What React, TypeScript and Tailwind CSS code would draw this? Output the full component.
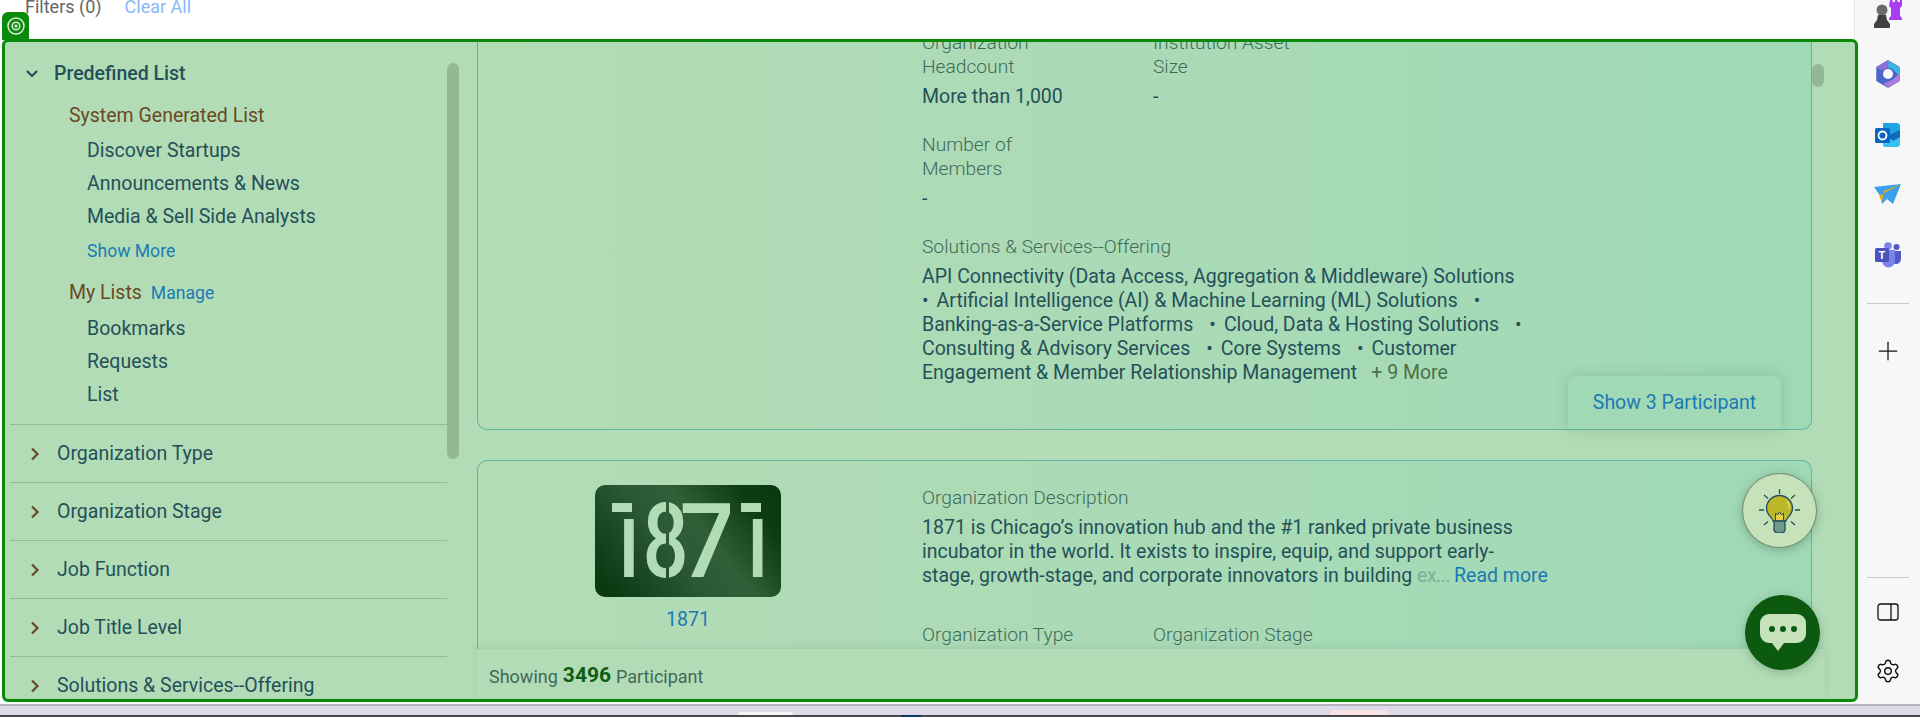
import React from "react";
import { Plus, Settings } from "lucide-react";

const systemLists = ["Discover Startups", "Announcements & News", "Media & Sell Side Analysts"];
const myLists = ["Bookmarks", "Requests", "List"];
const filters = ["Organization Type", "Organization Stage", "Job Function", "Job Title Level", "Solutions & Services--Offering"];

const Dot = ({ first }: { first?: boolean }) => (
    <span className={first ? "mr-[8px]" : "ml-[16px] mr-[8px]"}>•</span>
);

const SideRail = () => (
    <aside className="relative z-0 flex h-[704px] w-[66px] flex-col items-center border-l border-[#e8e8e8] bg-[#f7f7f7]">
        <svg width="32" height="30" viewBox="0 0 32 30" className="h-[30px] shrink-0">
            <path d="M18 0h2.500v2H23V0h2.500v2H28V0h2v6l-2 2v8l2 2v2H17v-2l2-2V8l-2-2z" fill="#a93df0" />
            <circle cx="10" cy="10" r="5.500" fill="#6a6a6a" />
            <path d="M6 15h8l1 5 3 4v3a1 1 0 0 1-1 1H3a1 1 0 0 1-1-1v-3l3-4z" fill="#404040" />
        </svg>
        <svg width="26" height="28" viewBox="0 0 26 28" className="mt-[30px] shrink-0">
            <path d="M13 1l11 6.500v13L13 27 2 20.500v-13z" fill="#4d66c9" stroke="#4d66c9" strokeLinejoin="round" strokeWidth="1.500" />
            <path d="M13 1l11 6.500V15l-6-6-5-2z" fill="#39b4e6" stroke="#39b4e6" strokeLinejoin="round" strokeWidth="1" />
            <path d="M24 14v6.500L13 27l-4-3 9-4z" fill="#b07be0" stroke="#b07be0" strokeLinejoin="round" strokeWidth="1" />
            <path d="M13 1L2 7.500 8 10l5-3z" fill="#8f6fd8" stroke="#8f6fd8" strokeLinejoin="round" strokeWidth="1" />
            <circle cx="13" cy="14" r="5" fill="#f7f7f7" />
        </svg>
        <svg width="26" height="26" viewBox="0 0 26 26" className="mt-[34px] shrink-0">
            <path d="M8 1h15l2 2v9H8z" fill="#1fa5e6" />
            <path d="M8 12l17 0v11l-2 2H9l-1-2z" fill="#38c0ee" />
            <path d="M12 14l13-6v7l-7 4z" fill="#0f6cbd" />
            <rect x="0" y="6" width="15" height="15" rx="1.500" fill="#0a66c2" />
            <circle cx="7.500" cy="13.500" r="4" fill="none" stroke="#fff" strokeWidth="1.800" />
        </svg>
        <svg width="28" height="20" viewBox="0 0 28 20" className="mt-[36px] shrink-0">
            <path d="M0 3l27-3-8 20-6-5-5 5-1-7z" fill="#3ba0ea" />
            <path d="M5 12L27 0 10 7 8 18z" fill="#f0a81c" />
        </svg>
        <svg width="26" height="26" viewBox="0 0 26 26" className="mt-[38px] shrink-0">
            <circle cx="21.500" cy="5" r="3" fill="#5059c9" />
            <path d="M17 9h9v8a5 5 0 0 1-8 4z" fill="#5059c9" />
            <circle cx="13" cy="4" r="3.800" fill="#7b83eb" />
            <path d="M6 8h14v11a6.500 6.500 0 0 1-13 0z" fill="#7b83eb" />
            <rect x="0" y="6" width="14" height="14" rx="1.500" fill="#4b53bc" />
            <text x="7" y="17" textAnchor="middle" fontSize="11" fontWeight="700" fill="#fff" fontFamily="Roboto, sans-serif">T</text>
        </svg>
        <div className="mt-[35px] h-px w-[42px] shrink-0 bg-[#c9c9c9]" />
        <Plus size={30} strokeWidth={1} className="mt-[32px] shrink-0 text-[#111]" />
        <div className="mt-auto h-px w-[42px] shrink-0 bg-[#c9c9c9]" />
        <svg width="22" height="18" viewBox="0 0 22 18" className="mt-[25px] shrink-0" fill="none" stroke="#111" strokeWidth="1.300">
            <rect x="1" y="1" width="20" height="16" rx="2.500" />
            <path d="M14 1v16" />
        </svg>
        <Settings size={26} strokeWidth={1.3} className="mb-[20px] mt-[37px] shrink-0 text-[#111]" />
    </aside>
);

const FiltersPanel = () => (
    <div className="relative h-full w-[472px] shrink-0 overflow-hidden">
        <div className="w-[442px] pl-[5px] text-[19.5px] leading-[24px] text-[#24505a]">
            <div className="mt-[20px] flex h-[24px] items-center pl-[16px]">
                <svg width="12" height="8" viewBox="0 0 12 8" fill="none" stroke="#24505a" strokeWidth="2.200">
                    <path d="M1 1l5 5 5-5" />
                </svg>
                <span className="ml-[16px] font-medium">Predefined List</span>
            </div>
            <div className="mt-[18px] pl-[59px] text-[#6a4a24]">System Generated List</div>
            <div className="mt-[11px] flex flex-col gap-[9px] pl-[77px]">
                {systemLists.map((item) => <div key={item}>{item}</div>)}
            </div>
            <div className="mt-[10px] pl-[77px] text-[17.6px] text-[#1a7ab5]">Show More</div>
            <div className="mt-[18px] flex items-baseline pl-[59px] text-[#6a4a24]">
                My Lists
                <span className="ml-[9px] text-[17.6px] text-[#1a7ab5]">Manage</span>
            </div>
            <div className="mt-[12px] flex flex-col gap-[9px] pl-[77px]">
                {myLists.map((item) => <div key={item}>{item}</div>)}
            </div>
            <div className="mt-[17px]">
                {filters.map((item) => (
                    <div key={item} className="flex h-[58px] items-center border-t border-[#93bb96] pl-[20px]">
                        <svg width="10" height="14" viewBox="0 0 10 14" fill="none" stroke="#6a4a24" strokeWidth="2.200">
                            <path d="M2 1.500L7.500 7 2 12.500" />
                        </svg>
                        <span className="ml-[17px]">{item}</span>
                    </div>
                ))}
            </div>
        </div>
        <div className="absolute left-[442px] top-[21px] h-[396px] w-[12px] rounded-full bg-[#92b994]" />
    </div>
);

const Label = ({ children }: { children: React.ReactNode }) => (
    <div className="text-[19.2px] font-light text-[#3f6a5c]">{children}</div>
);

const LogoMark = () => (
    <svg width="186" height="112" viewBox="0 0 186 112" className="rounded-[10px]">
        <defs>
            <linearGradient id="logoFill" gradientUnits="userSpaceOnUse" x1="20" y1="112" x2="166" y2="0">
                <stop offset="0" stopColor="#0a3a12" />
                <stop offset=".4" stopColor="#2a5a34" />
                <stop offset=".6" stopColor="#2f6038" />
                <stop offset=".9" stopColor="#0c3c14" />
                <stop offset="1" stopColor="#0a3a12" />
            </linearGradient>
        </defs>
        <rect width="186" height="112" fill="url(#logoFill)" />
        <g fontSize="104" fontWeight="500" fontFamily="Roboto, sans-serif" fill="#b2dcb5">
            <text x="10.500" y="92" transform="scale(.78 1)">1</text>
            <text x="61" y="92" transform="scale(.78 1)">8</text>
            <text x="89" y="92" transform="scale(.95 1)">7</text>
            <text x="175.500" y="92" transform="scale(.78 1)">1</text>
        </g>
        {/* stencil cuts, same gradient as the plate */}
        <rect x="6" y="10" width="21" height="34" fill="url(#logoFill)" />
        <rect x="135" y="10" width="21" height="34" fill="url(#logoFill)" />
        <rect x="6" y="10" width="34" height="24" fill="url(#logoFill)" />
        <rect x="135" y="10" width="34" height="24" fill="url(#logoFill)" />
        <rect x="17" y="18" width="20" height="9" fill="#b2dcb5" />
        <rect x="146" y="18" width="20" height="9" fill="#b2dcb5" />
        <rect x="71" y="14" width="3" height="84" fill="url(#logoFill)" />
    </svg>
);

const Bulb = () => (
    <svg width="41" height="44" viewBox="0 0 41 44" fill="none" stroke="#24505a" strokeWidth="1.300">
        <path d="M20.500 0v5M0 21h5M36 21h5M5 6l4 3.500M36 6l-4 3.500M5 36l4-3.500M36 36l-4-3.500" />
        <path d="M14 32c0-3-6.500-6-6.500-12.500a13 13 0 0 1 26 0c0 6.500-6.500 9.500-6.500 12.500z" fill="#bdb82a" />
        <path d="M28 12a10 10 0 0 1 2 8" stroke="#dcd87a" />
        <path d="M16.500 32v-8l2 2 2-3 2 3 2-2v8z" fill="#e4cf4a" strokeWidth="1" />
        <path d="M15 32h11v7a4 4 0 0 1-4 5h-3a4 4 0 0 1-4-5z" fill="#6f9a8a" />
    </svg>
);

const Cards = () => (
    <div className="h-full overflow-hidden">
        <div className="w-[1335px] text-[19.5px] leading-[24px] text-[#24505a]">
            <div className="relative flow-root h-[388px] rounded-b-[10px] border border-t-0 border-[#62b5a4] bg-gradient-to-r from-[#b3dcb5] to-[#a0d9b6]">
                <div className="ml-[444px] w-[640px]">
                    <div className="-mt-[11px] flex">
                        <div className="w-[231px]">
                            <Label>Organization<br />Headcount</Label>
                            <div className="mt-[6px]">More than 1,000</div>
                        </div>
                        <div>
                            <Label>Institution Asset<br />Size</Label>
                            <div className="mt-[6px]">-</div>
                        </div>
                    </div>
                    <div className="mt-[24px]">
                        <Label>Number of<br />Members</Label>
                        <div className="mt-[6px]">-</div>
                    </div>
                    <div className="mt-[24px]">
                        <Label>Solutions &amp; Services--Offering</Label>
                        <div className="mt-[6px]">
                            API Connectivity (Data Access, Aggregation &amp; Middleware) Solutions<br />
                            <Dot first />Artificial Intelligence (AI) &amp; Machine Learning (ML) Solutions<Dot /><br />
                            Banking-as-a-Service Platforms<Dot />Cloud, Data &amp; Hosting Solutions<Dot /><br />
                            Consulting &amp; Advisory Services<Dot />Core Systems<Dot />Customer<br />
                            Engagement &amp; Member Relationship Management
                            <span className="ml-[14px] text-[#4d7044]">+ 9 More</span>
                        </div>
                    </div>
                </div>
                <div className="absolute bottom-0 right-[30px] flex h-[53px] w-[213px] items-center justify-center rounded-t-[8px] bg-[#a1d9b6] text-[#1a7ab5] shadow-[0_0_14px_rgba(60,110,80,0.25)]">
                    Show 3 Participant
                </div>
            </div>
            <div className="mt-[30px] flex h-[260px] rounded-t-[10px] border border-b-0 border-[#62b5a4] bg-gradient-to-r from-[#b3dcb5] to-[#a0d9b6]">
                <div className="ml-[117px] mt-[24px] flex w-[186px] flex-col items-center">
                    <LogoMark />
                    <div className="mt-[11px] text-[#1a7ab5]">1871</div>
                </div>
                <div className="ml-[141px] mt-[25px] w-[640px]">
                    <Label>Organization Description</Label>
                    <div className="mt-[6px]">
                        1871 is Chicago’s innovation hub and the #1 ranked private business<br />
                        incubator in the world. It exists to inspire, equip, and support early-<br />
                        stage, growth-stage, and corporate innovators in building <span className="tracking-[-0.5px] text-[#7fae9a]">ex...</span><span className="ml-[4px] text-[#1a7ab5]">Read more</span>
                    </div>
                    <div className="mt-[35px] flex">
                        <div className="w-[231px]"><Label>Organization Type</Label></div>
                        <Label>Organization Stage</Label>
                    </div>
                </div>
            </div>
        </div>
    </div>
);

const App = () => {
    return (
        <div className="relative flex h-[717px] w-[1920px] flex-col overflow-hidden bg-white font-['Roboto',sans-serif]">
            <div className="flex h-[704px]">
                <div className="relative z-10 flex w-[1854px] flex-col">
                    <div className="h-[39px] overflow-hidden pl-[25px] text-[18px] leading-[24px]">
                        <div className="-mt-[5px] flex">
                            <span className="text-[#666]">Filters (0)</span>
                            <span className="ml-[23px] text-[#8ab8f5]">Clear All</span>
                        </div>
                    </div>
                    <div className="absolute left-[2px] top-[12px] flex h-[28px] w-[27px] items-center justify-center rounded-t-[6px] bg-[#0a8a0a]">
                        <svg width="20" height="20" viewBox="0 0 20 20" fill="none" stroke="#d8f0d8" strokeWidth="1.500">
                            <circle cx="10" cy="10" r="8" />
                            <circle cx="10" cy="10" r="3.800" />
                            <circle cx="10" cy="10" r=".8" fill="#d8f0d8" />
                        </svg>
                    </div>
                    <div className="ml-[2px] h-[663px] w-[1856px] rounded-[6px] border-[3px] border-[#0a8a0a] bg-[#b2dcb5]">
                        <div className="relative flex h-full overflow-hidden">
                            <FiltersPanel />
                            <Cards />
                            <div className="absolute left-[1807px] top-[22px] h-[23px] w-[12px] rounded-full bg-[#92b994]" />
                            <div className="absolute bottom-0 left-[472px] flex h-[50px] w-[1348px] items-center bg-[#b2dcb5] pl-[12px] pt-[4px] text-[18px] text-[#3f6a5c] shadow-[0_-2px_6px_rgba(60,110,80,0.12)]">
                                Showing <span className="mx-[5px] text-[21px] font-bold text-[#0f5c14]">3496</span> Participant
                            </div>
                            <div className="absolute left-[1737px] top-[431px] flex h-[75px] w-[75px] items-center justify-center rounded-full border border-[#6f8a6a] bg-[#c5e2bb] shadow-[0_2px_10px_rgba(40,80,60,0.35)]">
                                <Bulb />
                            </div>
                            <div className="absolute left-[1740px] top-[553px] flex h-[75px] w-[75px] items-center justify-center rounded-full bg-[#0b5a10] shadow-[0_2px_10px_rgba(40,80,60,0.3)]">
                                <svg width="46" height="38" viewBox="0 0 46 38">
                                    <path d="M9 0h28a9 9 0 0 1 9 9v11a9 9 0 0 1-9 9H24l-6 8-6-8H9a9 9 0 0 1-9-9V9a9 9 0 0 1 9-9z" fill="#c5e2bb" />
                                    <circle cx="12" cy="15" r="3" fill="#0b5a10" />
                                    <circle cx="23" cy="15" r="3" fill="#0b5a10" />
                                    <circle cx="34" cy="15" r="3" fill="#0b5a10" />
                                </svg>
                            </div>
                        </div>
                    </div>
                </div>
                <SideRail />
            </div>
            <div className="relative h-[11px] border-t-2 border-[#b5b2bc] bg-[#dedae9]">
                <div className="absolute bottom-0 left-[738px] h-[3px] w-[55px] rounded-t-[4px] bg-[#f5f5f5]" />
                <div className="absolute bottom-0 left-[1330px] h-[5px] w-[58px] rounded-t-[5px] bg-[#fbe3e3]" />
            </div>
            <div className="relative h-[2px] bg-[#48484c]">
                <div className="absolute bottom-0 left-[901px] h-[2px] w-[20px] bg-[#0a3a62]" />
            </div>
        </div>
    );
};

export default App;
